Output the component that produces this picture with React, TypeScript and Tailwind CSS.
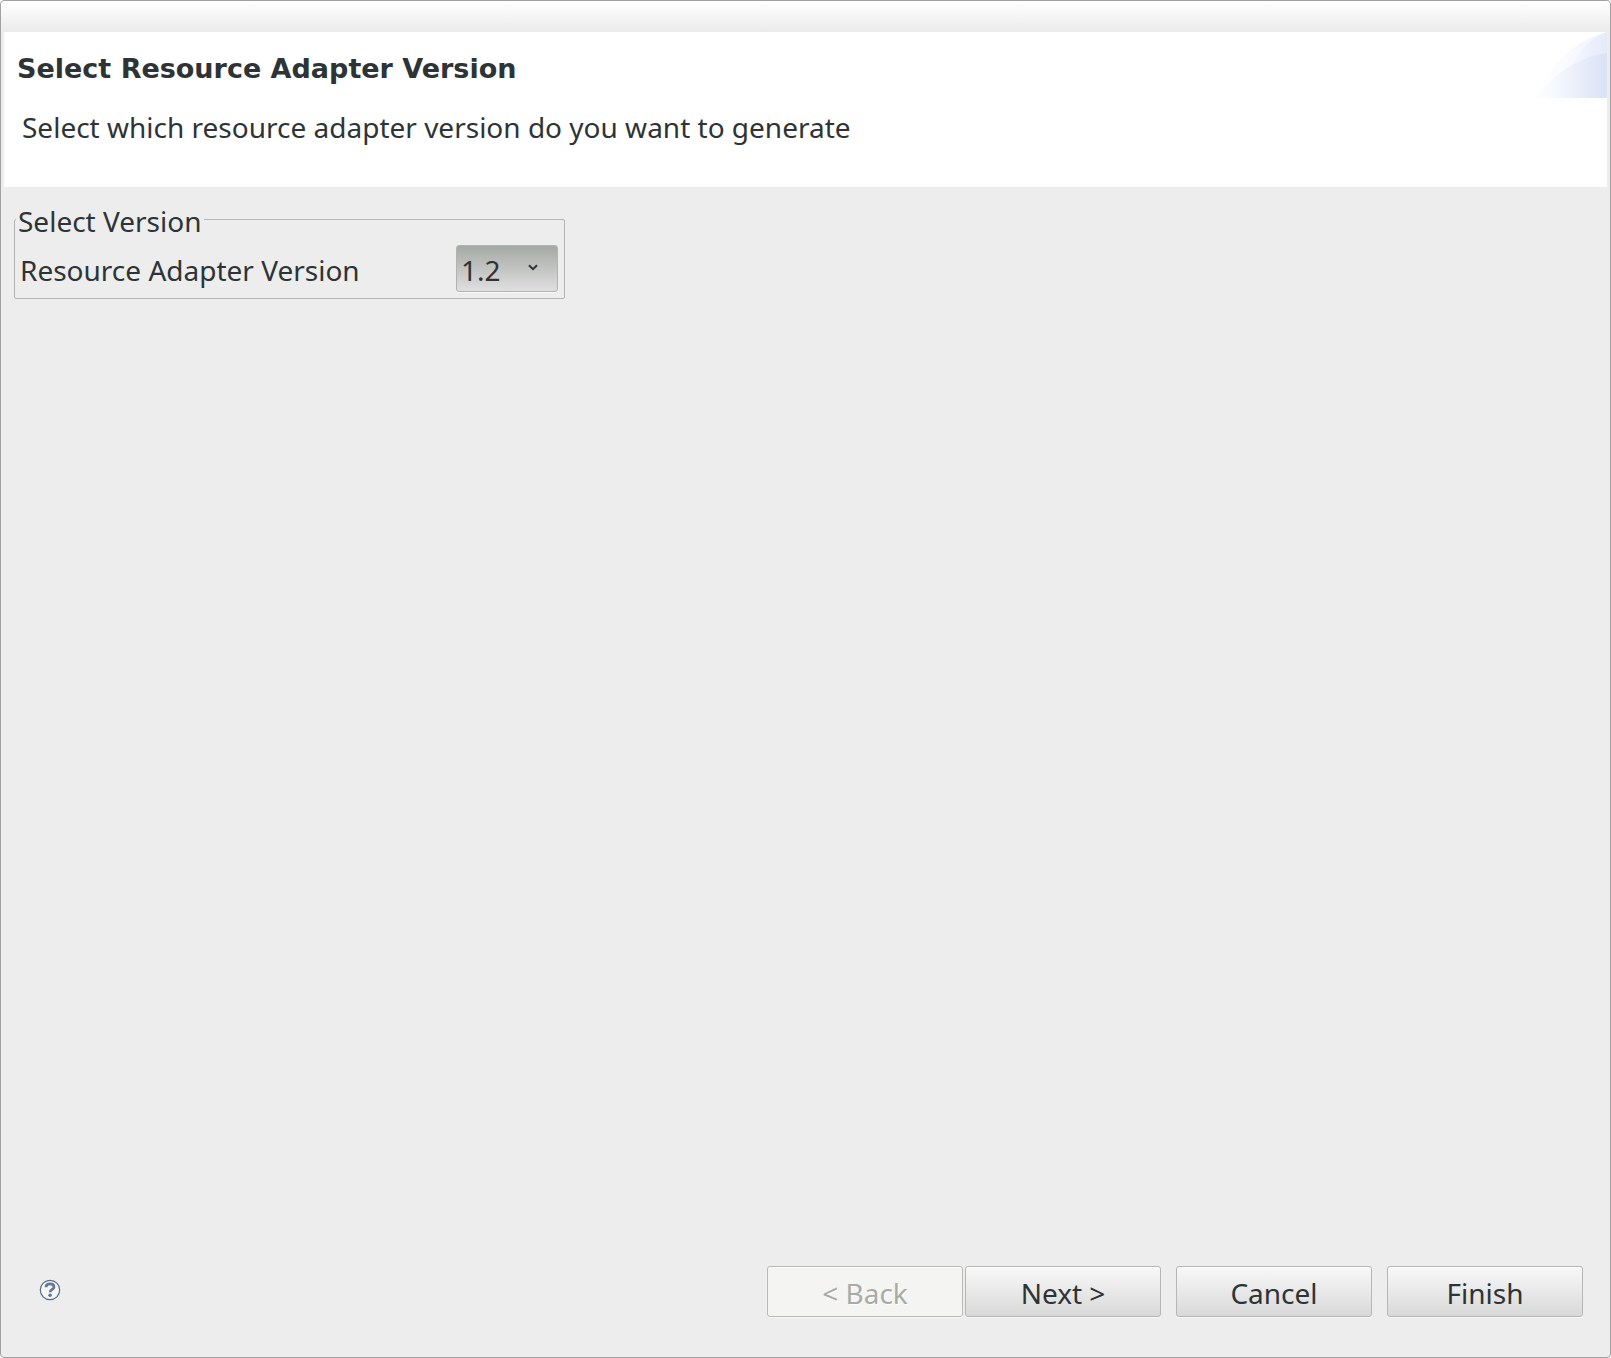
import { useId, useState } from "react";
import type { ButtonHTMLAttributes } from "react";

function DialogButton({ children, ...props }: ButtonHTMLAttributes<HTMLButtonElement>) {
  return (
    <button
      type="button"
      {...props}
      className="h-[51px] w-[196px] rounded-[3px] border border-[#b4b7b4] bg-linear-to-b from-[#f8f8f8] to-[#d9d9d9] pt-[2px] shadow-[0_1px_0_#f8f8f8,inset_0_1px_0_#fdfdfd] disabled:border-[#b8bab6] disabled:bg-[#f4f4f2] disabled:bg-none disabled:text-[#a7aba7] disabled:[text-shadow:1px_1px_0_#ffffff]"
    >
      {children}
    </button>
  );
}

function HeaderSwoosh() {
  return (
    <svg width="74" height="66" viewBox="0 0 74 66" aria-hidden="true" className="shrink-0">
      <defs>
        <linearGradient id="swooshBack" x1="0" x2="1" y1="0" y2="0">
          <stop offset="0" stopColor="#ffffff" />
          <stop offset="0.5" stopColor="#f8fafe" />
          <stop offset="1" stopColor="#eef2fc" />
        </linearGradient>
        <linearGradient id="swooshMid" x1="0" x2="1" y1="0" y2="0">
          <stop offset="0" stopColor="#f5f8fe" />
          <stop offset="1" stopColor="#e4eaf8" />
        </linearGradient>
        <linearGradient id="swooshFront" x1="0" x2="1" y1="0" y2="0">
          <stop offset="0" stopColor="#ffffff" />
          <stop offset="0.35" stopColor="#f3f6fd" />
          <stop offset="0.7" stopColor="#e5ebf9" />
          <stop offset="1" stopColor="#dae2f6" />
        </linearGradient>
      </defs>
      <path d="M2 66 C14 38 37 9 74 0 V66 Z" fill="url(#swooshBack)" />
      <path d="M36 40 C43 23 54 7 74 0 V66 H36 Z" fill="url(#swooshMid)" />
      <path d="M2 66 C20 44 43 25 74 21 V66 Z" fill="url(#swooshFront)" />
    </svg>
  );
}

function HelpIcon() {
  return (
    <svg width="22" height="22" viewBox="0 0 22 22" fill="none" aria-hidden="true">
      <circle cx="11" cy="11" r="9.7" fill="#f6f6f6" stroke="#5a6c8c" strokeWidth="1.2" />
      <path
        d="M7 8.2 C7 5.7 8.8 4.9 11 4.9 C13.5 4.9 15 6 15 8 C15 10.6 11.2 10.4 11.2 13.2"
        stroke="#63779b"
        strokeWidth="2.7"
      />
      <circle cx="11.1" cy="16.3" r="1.8" fill="#63779b" />
    </svg>
  );
}

export default function App() {
  const [version, setVersion] = useState("1.2");
  const versionId = useId();

  return (
    <div className="min-h-screen bg-white">
      <main className="flex min-h-screen flex-col rounded-[4px] border border-[#a1a1a1] bg-[#ededed] font-['Noto_Sans',sans-serif] text-[28px] leading-9 text-[#2e3436]">
        <div className="h-[31px] rounded-t-[4px] bg-linear-to-b from-white to-[#ebebeb]" />

        <header className="mx-[3px] flex h-[155px] items-start justify-between bg-white">
          <div className="pt-[19px] pl-[13px]">
            <h1 className="font-['DejaVu_Sans',sans-serif] text-[27px] leading-9 font-bold">
              Select Resource Adapter Version
            </h1>
            <p className="mt-[22px] pl-[5px]">Select which resource adapter version do you want to generate</p>
          </div>
          <HeaderSwoosh />
        </header>

        <section className="grow px-[13px] pt-4">
          <fieldset className="w-[551px] rounded-[2px] border border-[#b4b4b4] px-[5px] pb-[6px]">
            <legend className="-ml-1 px-[2px] pt-1 leading-7">Select Version</legend>
            <div className="flex items-center justify-between pt-[10px] pr-px">
              <label htmlFor={versionId} className="pt-[2px]">
                Resource Adapter Version
              </label>
              <div className="relative">
                <select
                  id={versionId}
                  value={version}
                  onChange={(e) => setVersion(e.target.value)}
                  className="block h-[47px] w-[102px] appearance-none rounded-[3px] border border-[#b0b3b0] bg-linear-to-b from-[#a5a9a5] to-[#dfdfdf] pt-[2px] pl-1 shadow-[0_1px_0_#f8f8f8]"
                >
                  <option>1.0</option>
                  <option>1.1</option>
                  <option>1.2</option>
                  <option>1.3</option>
                </select>
                <svg
                  width="10"
                  height="8"
                  viewBox="0 0 10 8"
                  fill="none"
                  aria-hidden="true"
                  className="pointer-events-none absolute top-[19px] right-5"
                >
                  <path d="M1 1.2 L5 5.2 L9 1.2" stroke="#2e3436" strokeWidth="2" />
                </svg>
              </div>
            </div>
          </fieldset>
        </section>

        <footer className="flex items-center justify-between pr-[27px] pb-10 pl-[38px]">
          <button type="button" aria-label="Help" className="pb-1">
            <HelpIcon />
          </button>
          <div className="flex gap-[15px]">
            <div className="flex gap-[2px]">
              <DialogButton disabled>&lt; Back</DialogButton>
              <DialogButton>Next &gt;</DialogButton>
            </div>
            <DialogButton>Cancel</DialogButton>
            <DialogButton>Finish</DialogButton>
          </div>
        </footer>
      </main>
    </div>
  );
}
